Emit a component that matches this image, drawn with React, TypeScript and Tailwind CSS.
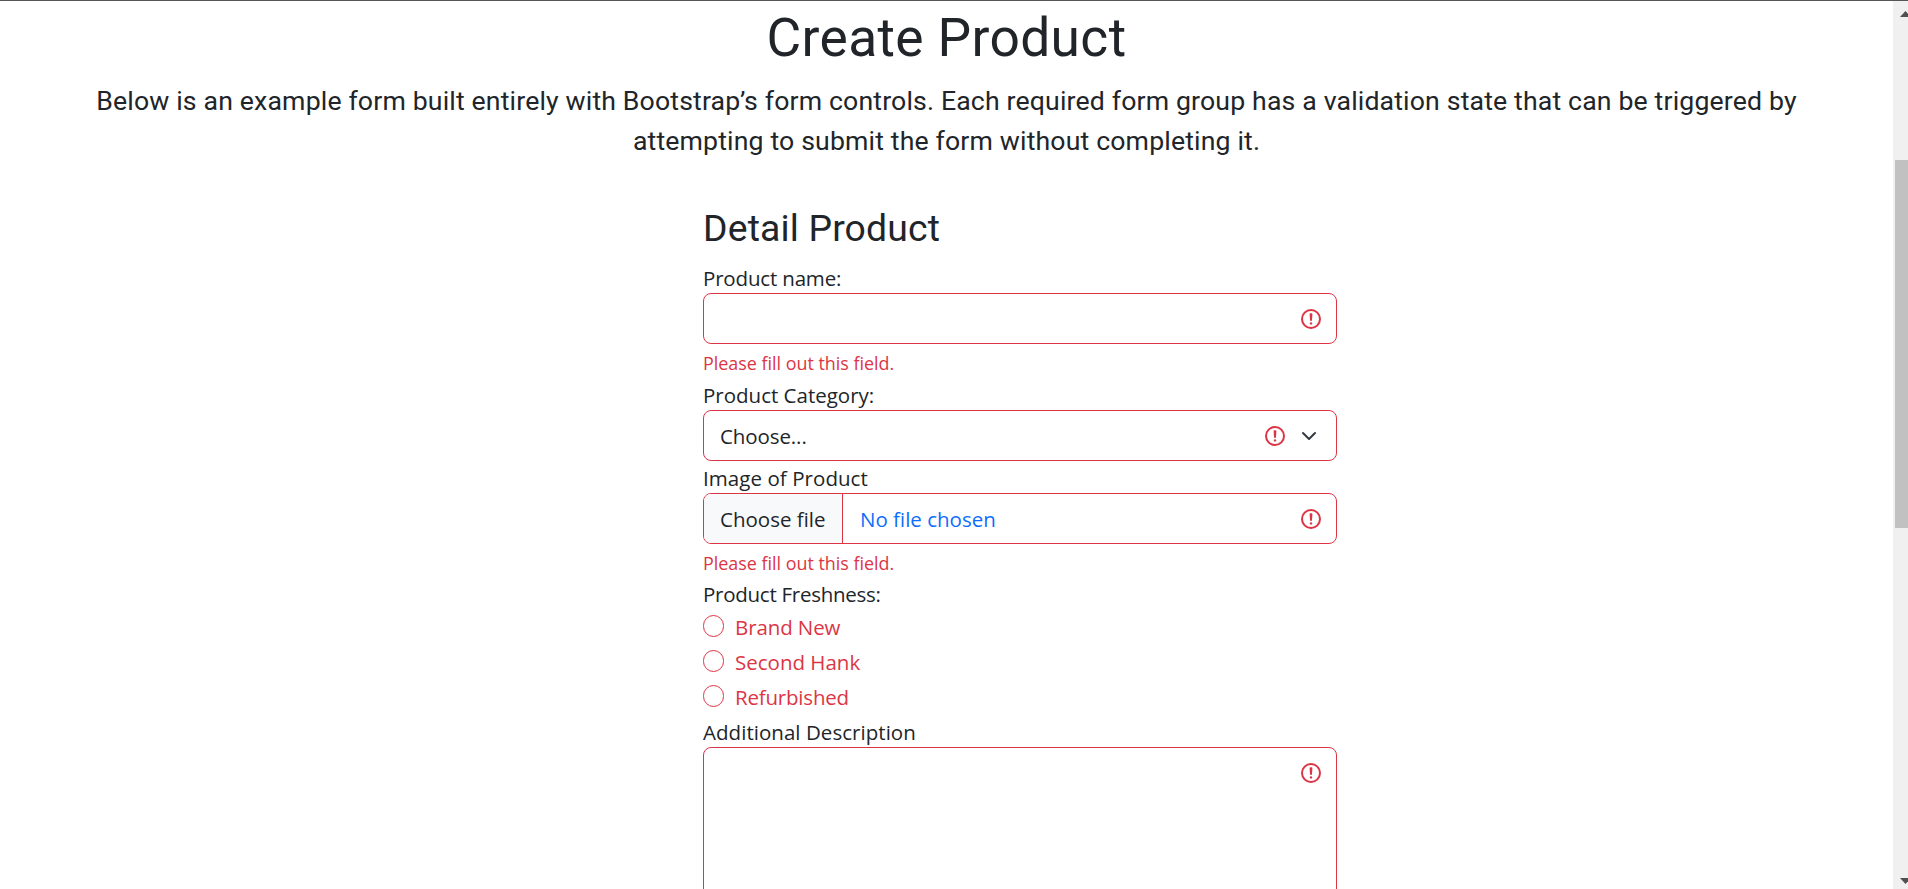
import type { ReactNode } from 'react';

function InvalidIcon({ className = '' }: { className?: string }) {
  return (
    <svg viewBox="0 0 12 12" fill="none" stroke="#dc3545" className={`size-6 shrink-0 ${className}`}>
      <circle cx="6" cy="6" r="4.5" />
      <path strokeLinejoin="round" d="M5.8 3.6h.4L6 6.5z" />
      <circle cx="6" cy="8.2" r=".6" fill="#dc3545" stroke="none" />
    </svg>
  );
}

function Label({ children, className = '' }: { children: ReactNode; className?: string }) {
  return <div className={`h-8 whitespace-nowrap leading-[34px] ${className}`}>{children}</div>;
}

function Feedback() {
  return (
    <div className="mt-[5px] h-7 whitespace-nowrap text-[17.9px] leading-7 text-[#dc3545]">
      Please fill out this field.
    </div>
  );
}

const control = 'flex w-full rounded-lg border border-[#dc3545] bg-white';

function Radio({ label, className = '' }: { label: string; className?: string }) {
  return (
    <label className="flex h-[35px]">
      <span className="mt-[5px] h-[22px] w-[21px] shrink-0 rounded-full border border-[#dc3545]" />
      <span className={`ml-[11px] whitespace-nowrap leading-[34px] text-[#dc3545] ${className}`}>{label}</span>
    </label>
  );
}

function Scrollbar() {
  return (
    <div className="flex w-[15px] shrink-0 flex-col overflow-hidden bg-[#f0f0f0]">
      <svg viewBox="0 0 15 16" className="h-4 w-[15px] shrink-0" fill="#505050">
        <path d="M7 16 12.5 10 18 16z" />
      </svg>
      <div className="ml-0.5 mt-[143px] h-[368px] bg-[#c1c1c1]" />
      <svg viewBox="0 0 15 11" className="mt-auto h-[11px] w-[15px] shrink-0" fill="#505050">
        <path d="M7 0H18L12.5 6z" />
      </svg>
    </div>
  );
}

export default function App() {
  return (
    <div className="flex h-[889px] w-[1908px] flex-col overflow-hidden border-t border-[#555] bg-white text-[#212529]">
      <div className="flex min-h-0 flex-1">
        <main className="min-w-0 flex-1 overflow-hidden">
          <header className="text-center font-['Roboto',sans-serif]">
            <h1 className="mt-[5px] h-16 text-[53.33px] leading-16 tracking-[0.35px]">Create Product</h1>
            <p className="mx-auto mt-[11px] w-[1748px] text-[26.67px] leading-10 tracking-[0.15px]">
              Below is an example form built entirely with Bootstrap’s form controls. Each required form group has a
              validation state that can be triggered by attempting to submit the form without completing it.
            </p>
          </header>
          <form className="ml-[703px] mt-[45px] w-[634px] font-['Open_Sans',sans-serif] text-[20.5px]">
            <h2 className="mb-[10px] h-[45px] font-['Roboto',sans-serif] text-[37.33px] leading-[45px] tracking-[0.17px]">
              Detail Product
            </h2>
            <Label className="tracking-[-0.17px]">Product name:</Label>
            <div className={`${control} h-[51px] items-center justify-end pr-[13px]`}>
              <InvalidIcon />
            </div>
            <Feedback />
            <div className="pt-px">
              <Label>Product Category:</Label>
            </div>
            <div className={`${control} h-[51px] items-center pl-4 pr-[19px]`}>
              <span className="flex-1 pt-0.5 tracking-[-0.1px]">Choose...</span>
              <InvalidIcon />
              <svg
                viewBox="0 0 16 16"
                className="ml-3.5 size-4 shrink-0"
                fill="none"
                stroke="#343a40"
                strokeWidth="2"
                strokeLinecap="round"
                strokeLinejoin="round"
              >
                <path d="m2 5 6 6 6-6" />
              </svg>
            </div>
            <Label className="tracking-[0.06px]">Image of Product</Label>
            <div className={`${control} h-[51px] items-center overflow-hidden pr-[13px]`}>
              <span className="flex h-full w-[139px] items-center whitespace-nowrap border-r border-[#dc3545] bg-[#f8f9fa] pl-4 pt-0.5">
                Choose file
              </span>
              <span className="flex-1 pl-[17px] pt-0.5 text-[#0d6efd]">No file chosen</span>
              <InvalidIcon />
            </div>
            <Feedback />
            <Label className="tracking-[-0.26px]">Product Freshness:</Label>
            <div className="pt-px">
              <Radio label="Brand New" className="tracking-[-0.1px]" />
              <Radio label="Second Hank" />
              <Radio label="Refurbished" className="tracking-[-0.2px]" />
            </div>
            <Label className="tracking-[0.04px]">Additional Description</Label>
            <div className={`${control} h-[180px] justify-end pr-[13px] pt-[13px]`}>
              <InvalidIcon />
            </div>
          </form>
        </main>
        <Scrollbar />
      </div>
    </div>
  );
}
